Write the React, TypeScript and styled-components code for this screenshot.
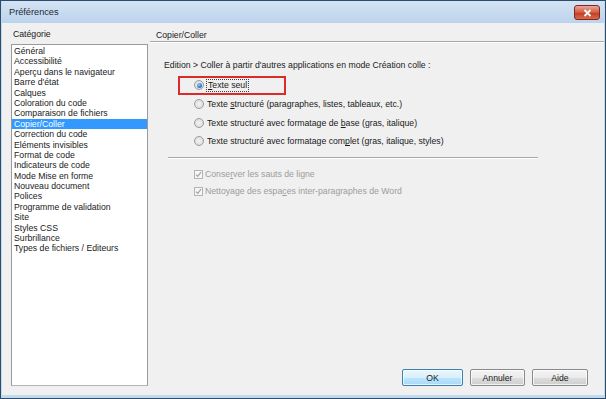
import React from "react";
import styled, { createGlobalStyle } from "styled-components";

const GlobalStyle = createGlobalStyle`
  html, body {
    margin: 0;
    padding: 0;
    background: #f0f0f0;
  }
  * {
    box-sizing: border-box;
  }
`;

const categories = [
  "Général",
  "Accessibilité",
  "Aperçu dans le navigateur",
  "Barre d'état",
  "Calques",
  "Coloration du code",
  "Comparaison de fichiers",
  "Copier/Coller",
  "Correction du code",
  "Eléments invisibles",
  "Format de code",
  "Indicateurs de code",
  "Mode Mise en forme",
  "Nouveau document",
  "Polices",
  "Programme de validation",
  "Site",
  "Styles CSS",
  "Surbrillance",
  "Types de fichiers / Editeurs",
];

const Window = styled.div`
  width: 606px;
  height: 399px;
  display: flex;
  flex-direction: column;
  background: #c3d9ee;
  border: 1px solid #2d4c6c;
  padding: 0 1px 3px 1px;
  font-family: "Liberation Sans", Arial, sans-serif;
  font-size: 8.7px;
  color: #1a1a1a;
`;

const TitleBar = styled.div`
  height: 22px;
  display: flex;
  align-items: center;
  justify-content: space-between;
  padding: 0 4px 0 7px;
  background: linear-gradient(#d4e3f4, #bcd3eb);
`;

const Title = styled.span`
  font-size: 9.2px;
  color: #1b2a3a;
`;

const CloseButton = styled.div`
  width: 26px;
  height: 15px;
  margin-top: 1px;
  border: 1px solid #7a2a1e;
  border-radius: 3px;
  background: linear-gradient(#e9a99b, #d5583e 50%, #c23a1f 51%, #d86a4a);
  display: flex;
  align-items: center;
  justify-content: center;
`;

const Client = styled.div`
  flex: 1;
  display: flex;
  background: #f0f0f0;
`;

const Sidebar = styled.div`
  width: 137px;
  margin-left: 9px;
  padding: 5px 0 9px;
  display: flex;
  flex-direction: column;
`;

const Label = styled.div`
  line-height: 12px;
  height: 12px;
  margin-bottom: 4px;
  padding-left: 2px;
`;

const ListBox = styled.div`
  flex: 1;
  background: #fff;
  border: 1px solid #9a9a9a;
  border-bottom-color: #b5b5b5;
  padding-top: 1px;
`;

const ListItem = styled.div<{ $selected?: boolean }>`
  height: 10.4px;
  line-height: 10.4px;
  padding-left: 2px;
  white-space: nowrap;
  background: ${(p) => (p.$selected ? "#3399ff" : "transparent")};
  color: ${(p) => (p.$selected ? "#fff" : "#1a1a1a")};
`;

const Main = styled.div`
  flex: 1;
  margin-left: 2px;
  display: flex;
  flex-direction: column;
  padding-bottom: 9px;
`;

const PanelHeader = styled.div`
  height: 12px;
  line-height: 12px;
  margin-top: 6px;
  padding-left: 6px;
  border-bottom: 1px solid #a8a8a8;
  box-shadow: 0 1px 0 #fff;
  box-sizing: content-box;
`;

const Content = styled.div`
  padding-left: 14px;
  display: flex;
  flex-direction: column;
`;

const Intro = styled.div`
  margin-top: 17px;
  line-height: 12px;
  margin-bottom: 5px;
`;

const OptionRow = styled.div<{ $disabled?: boolean }>`
  position: relative;
  height: 18.7px;
  display: flex;
  align-items: center;
  gap: 3px;
  padding-left: 30px;
  color: ${(p) => (p.$disabled ? "#9c9c9c" : "#1a1a1a")};
`;

const CheckRow = styled(OptionRow)`
  height: 17px;
  gap: 2px;
`;

const Annotation = styled.div`
  position: absolute;
  left: 14px;
  top: 0;
  width: 108px;
  height: 19px;
  border: 2px solid #dd2a2a;
  pointer-events: none;
`;

const Radio = styled.span<{ $checked?: boolean }>`
  width: 10px;
  height: 10px;
  border-radius: 50%;
  border: 1px solid #9b9b9b;
  background: radial-gradient(circle at 50% 50%, #f2f2f2, #d8d8d8);
  display: flex;
  align-items: center;
  justify-content: center;

  &::after {
    content: "";
    display: ${(p) => (p.$checked ? "block" : "none")};
    width: 5px;
    height: 5px;
    border-radius: 50%;
    background: radial-gradient(circle at 40% 35%, #8fd0ff, #1b6fc4 70%);
  }
`;

const Focus = styled.span`
  outline: 1px dotted #444;
  outline-offset: 0px;
  padding: 0 1px;
  line-height: 11px;
`;

const Key = styled.span`
  text-decoration: underline;
`;

const Separator = styled.div`
  margin: 6px 0 7px 4px;
  width: 370px;
  height: 2px;
  border-top: 1px solid #a8a8a8;
  border-bottom: 1px solid #fff;
`;

const CheckBox = styled.span`
  width: 9px;
  height: 9px;
  border: 1px solid #b4b4b4;
  background: #f6f6f6;
  display: flex;
  align-items: center;
  justify-content: center;
`;

const Footer = styled.div`
  margin-top: auto;
  display: flex;
  justify-content: flex-end;
  gap: 7px;
  padding-right: 16px;
`;

const Button = styled.div<{ $width: number; $default?: boolean }>`
  width: ${(p) => p.$width}px;
  height: 17px;
  display: flex;
  align-items: center;
  justify-content: center;
  border-radius: 2px;
  border: 1px solid ${(p) => (p.$default ? "#3c7fb1" : "#8a8a8a")};
  background: ${(p) =>
    p.$default
      ? "linear-gradient(#eaf6fd, #d9f0fc 50%, #bee6fd 51%, #a7d9f5)"
      : "linear-gradient(#f4f4f4, #ebebeb 50%, #dddddd 51%, #cfcfcf)"};
  box-shadow: inset 0 0 0 1px rgba(255, 255, 255, 0.7);
  color: #1a1a1a;
`;

const radios: React.ReactNode[] = [
  <>
    Texte <Key>s</Key>tructuré (paragraphes, listes, tableaux, etc.)
  </>,
  <>
    Texte structuré avec formatage de <Key>b</Key>ase (gras, italique)
  </>,
  <>
    Texte structuré avec formatage com<Key>p</Key>let (gras, italique, styles)
  </>,
];

const checks: React.ReactNode[] = [
  <>
    Conse<Key>r</Key>ver les sauts de ligne
  </>,
  <>
    Nettoyage des espa<Key>c</Key>es inter-paragraphes de Word
  </>,
];

const CheckMark = () => (
  <svg width="7" height="7" viewBox="0 0 7 7">
    <path d="M1 3.6 L2.8 5.4 L6 1.2" fill="none" stroke="#a2a2a2" strokeWidth="1.1" />
  </svg>
);

export default function App() {
  return (
    <>
      <GlobalStyle />
      <Window>
        <TitleBar>
          <Title>Préférences</Title>
          <CloseButton>
            <svg width="9" height="8" viewBox="0 0 9 8">
              <path d="M1.5 1 L7.5 7 M7.5 1 L1.5 7" stroke="#fff" strokeWidth="1.8" />
            </svg>
          </CloseButton>
        </TitleBar>
        <Client>
          <Sidebar>
            <Label>Catégorie</Label>
            <ListBox>
              {categories.map((c) => (
                <ListItem key={c} $selected={c === "Copier/Coller"}>
                  {c}
                </ListItem>
              ))}
            </ListBox>
          </Sidebar>
          <Main>
            <PanelHeader>Copier/Coller</PanelHeader>
            <Content>
              <Intro>
                Edition &gt; Coller à partir d'autres applications en mode Création colle :
              </Intro>
              <OptionRow>
                <Radio $checked />
                <Focus>
                  <Key>T</Key>exte seul
                </Focus>
                <Annotation />
              </OptionRow>
              {radios.map((r, i) => (
                <OptionRow key={i}>
                  <Radio />
                  <span>{r}</span>
                </OptionRow>
              ))}
              <Separator />
              {checks.map((c, i) => (
                <CheckRow key={i} $disabled>
                  <CheckBox>
                    <CheckMark />
                  </CheckBox>
                  <span>{c}</span>
                </CheckRow>
              ))}
            </Content>
            <Footer>
              <Button $width={61} $default>
                OK
              </Button>
              <Button $width={55}>Annuler</Button>
              <Button $width={56}>Aide</Button>
            </Footer>
          </Main>
        </Client>
      </Window>
    </>
  );
}
